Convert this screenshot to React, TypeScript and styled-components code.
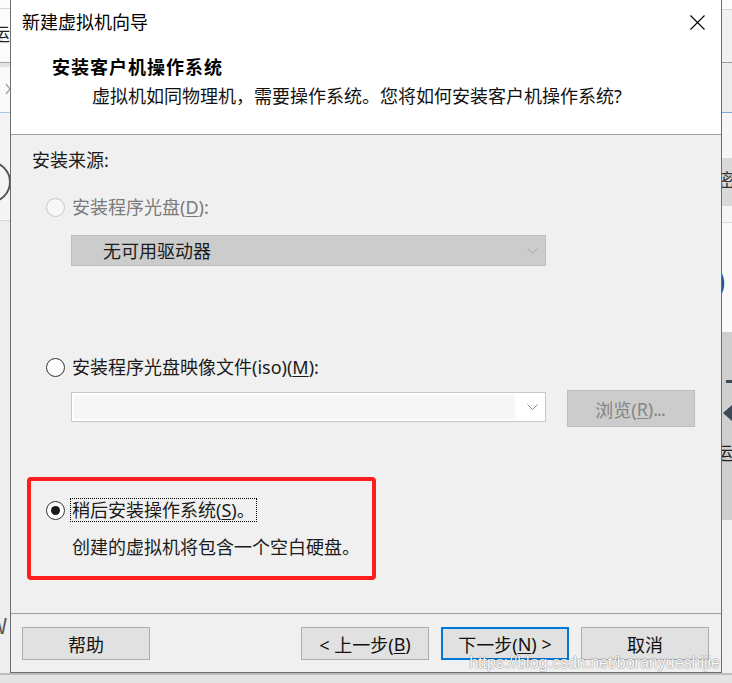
import React from "react";
import styled, { createGlobalStyle } from "styled-components";

const FONT = `"Noto Sans", "Noto Sans CJK SC", sans-serif`;

const Global = createGlobalStyle`
  html, body { margin: 0; padding: 0; }
  body { background: #e6e6e6; font-family: ${FONT}; overflow: hidden; }
  * { box-sizing: border-box; }
`;

const Screen = styled.div`
  width: 732px;
  height: 683px;
  display: flex;
  flex-direction: column;
  overflow: hidden;
  background: #e6e6e6;
`;

const TopRow = styled.div`
  display: flex;
  height: 673px;
`;

const Strip = styled.div`
  width: 10px;
  flex: 0 0 10px;
  display: flex;
  flex-direction: column;
  overflow: hidden;
  background: #f0f0f0;
`;

const Band = styled.div<{ $h?: number; $bg: string; $line?: string }>`
  position: relative;
  flex: ${(p) => (p.$h ? `0 0 ${p.$h}px` : "1 1 auto")};
  background: ${(p) => p.$bg};
  border-top: ${(p) => (p.$line ? `1px solid ${p.$line}` : "none")};
  overflow: hidden;
`;

const Glyph = styled.div<{ $size: number; $color: string; $top: number; $left: number; $weight?: number }>`
  font-family: "Noto Sans CJK SC", sans-serif;
  font-size: ${(p) => p.$size}px;
  line-height: ${(p) => p.$size}px;
  font-weight: ${(p) => p.$weight ?? 400};
  color: ${(p) => p.$color};
  margin-top: ${(p) => p.$top}px;
  margin-left: ${(p) => p.$left}px;
  white-space: nowrap;
`;

const Arc = styled.div`
  width: 42px;
  height: 42px;
  border-radius: 50%;
  border: 2px solid #4f5357;
  margin-top: 48px;
  margin-left: -31px;
`;

const Bar = styled.div<{ $top: number }>`
  width: 8px;
  height: 3px;
  background: #3d4a57;
  margin-top: ${(p) => p.$top}px;
  margin-left: 4px;
`;

const BottomShade = styled.div`
  flex: 1;
  background: #e4e4e4;
  border-top: 2px solid #bdbdbd;
`;

const Dialog = styled.div`
  position: relative;
  width: 712px;
  flex: 0 0 712px;
  height: 673px;
  border: 1px solid #6e6e6e;
  border-top: none;
  background: #f0f0f0;
  display: flex;
  flex-direction: column;
`;

const Header = styled.div`
  height: 135px;
  flex: 0 0 135px;
  background: #ffffff;
  border-bottom: 1px solid #a0a0a0;
`;

const TitleBar = styled.div`
  height: 44px;
  display: flex;
  align-items: center;
  justify-content: space-between;
  padding: 0 16px 0 11px;
`;

const Title = styled.div`
  font-size: 18px;
  line-height: 24px;
  color: #000;
`;

const CloseBtn = styled.div`
  width: 15px;
  height: 15px;
  display: flex;
`;

const Heading = styled.div`
  margin-top: 10px;
  padding-left: 41px;
  font-size: 18px;
  line-height: 26px;
  font-weight: 700;
  letter-spacing: 1px;
  color: #000;
`;

const SubTitle = styled.div`
  margin-top: 3px;
  padding-left: 81px;
  font-size: 18px;
  line-height: 26px;
  color: #111;
`;

const Content = styled.div`
  height: 479px;
  flex: 0 0 479px;
  border-bottom: 1px solid #a0a0a0;
  display: flex;
  flex-direction: column;
  align-items: flex-start;
`;

const SectionLabel = styled.div`
  margin-top: 12px;
  padding-left: 21px;
  font-size: 18px;
  line-height: 26px;
  color: #1b1b1b;
`;

const RadioRow = styled.div<{ $top: number; $indent: number }>`
  display: flex;
  align-items: center;
  height: 26px;
  margin-top: ${(p) => p.$top}px;
  padding-left: ${(p) => p.$indent}px;
`;

const RadioCircle = styled.span<{ $state: "disabled" | "off" | "on" }>`
  width: 19px;
  height: 19px;
  flex: 0 0 19px;
  border-radius: 50%;
  border: 1px solid ${(p) => (p.$state === "disabled" ? "#c6c6c6" : "#333333")};
  background: ${(p) => (p.$state === "disabled" ? "#f7f7f7" : "#ffffff")};
  display: flex;
  align-items: center;
  justify-content: center;
  &::after {
    content: "";
    display: ${(p) => (p.$state === "on" ? "block" : "none")};
    width: 9px;
    height: 9px;
    border-radius: 50%;
    background: #1a1a1a;
  }
`;

const RadioLabel = styled.span<{ $disabled?: boolean; $focused?: boolean }>`
  margin-left: 5px;
  padding: 0 1px;
  border: 1px ${(p) => (p.$focused ? "dotted #000" : "solid transparent")};
  font-size: 18px;
  line-height: 22px;
  color: ${(p) => (p.$disabled ? "#7b7b7b" : "#1b1b1b")};
  white-space: nowrap;
`;

const U = styled.span`
  text-decoration: underline;
  text-underline-offset: 2px;
`;

const Combo = styled.div<{ $disabled?: boolean; $top: number }>`
  margin-top: ${(p) => p.$top}px;
  margin-left: 60px;
  width: 475px;
  height: ${(p) => (p.$disabled ? 31 : 30)}px;
  border: 1px solid ${(p) => (p.$disabled ? "#bdbdbd" : "#c8c8c8")};
  background: ${(p) => (p.$disabled ? "#cccccc" : "#ffffff")};
  display: flex;
  align-items: center;
  padding: ${(p) => (p.$disabled ? "0 7px 0 31px" : "2px 7px 2px 2px")};
`;

const ComboText = styled.div`
  flex: 1;
  font-size: 18px;
  line-height: 26px;
  color: #1b1b1b;
`;

const ComboInput = styled.div`
  flex: 1;
  align-self: stretch;
  background: #f6f6f6;
  margin-right: 12px;
`;

const Chevron = styled.svg`
  width: 11px;
  height: 6px;
  flex: 0 0 11px;
`;

const FileRow = styled.div`
  margin-top: 10px;
  display: flex;
  align-items: flex-start;
`;

const BrowseBtn = styled.div`
  margin-left: 21px;
  width: 128px;
  height: 37px;
  border: 1px solid #bfbfbf;
  background: #cccccc;
  color: #858585;
  font-size: 18px;
  display: flex;
  align-items: center;
  justify-content: center;
  padding-right: 2px;
`;

const Dots = styled.span`
  letter-spacing: -1px;
`;

const Highlight = styled.div`
  margin-top: 50px;
  margin-left: 16px;
  width: 349px;
  height: 103px;
  border: 4px solid #fe1e1e;
  border-radius: 4px;
  display: flex;
  flex-direction: column;
`;

const FocusRow = styled.div`
  display: flex;
  align-items: center;
  height: 24px;
  margin-top: 17px;
  padding-left: 15px;
`;

const Description = styled.div`
  margin-top: 12px;
  padding-left: 41px;
  font-size: 18px;
  line-height: 26px;
  color: #1b1b1b;
  white-space: nowrap;
`;

const Footer = styled.div`
  flex: 1;
  display: flex;
  align-items: flex-start;
  gap: 12px;
  padding: 13px 12px 0 11px;
`;

const Spacer = styled.div`
  flex: 1;
`;

const Button = styled.div<{ $primary?: boolean }>`
  width: 128px;
  height: 33px;
  background: #e1e1e1;
  border: ${(p) => (p.$primary ? "2px solid #0078d7" : "1px solid #adadad")};
  font-size: 18px;
  color: #111;
  display: flex;
  align-items: center;
  justify-content: center;
  white-space: pre;
`;

const Watermark = styled.div`
  position: absolute;
  right: 1px;
  bottom: 0;
  font-family: "Liberation Sans", Arial, sans-serif;
  font-size: 16px;
  line-height: 18px;
  color: rgba(255, 255, 255, 0.95);
  text-shadow: 1px 0 0 rgba(0, 0, 0, 0.18), -1px 0 0 rgba(0, 0, 0, 0.18), 0 1px 0 rgba(0, 0, 0, 0.18),
    0 -1px 0 rgba(0, 0, 0, 0.18);
  pointer-events: none;
`;

const ChevronIcon = ({ color }: { color: string }) => (
  <Chevron viewBox="0 0 11 6">
    <polyline points="0.5,0.5 5.5,5.5 10.5,0.5" fill="none" stroke={color} strokeWidth="1" />
  </Chevron>
);

export default function App() {
  return (
    <>
      <Global />
      <Screen>
        <TopRow>
          <Strip>
            <Band $h={8} $bg="#fbfbfb" />
            <Band $h={54} $bg="#fbfbfb" $line="#d6d6d6">
              <Glyph $size={18} $color="#222" $top={15} $left={-8}>运</Glyph>
            </Band>
            <Band $h={5} $bg="#e2e2e2" $line="#a6a6a6" />
            <Band $h={45} $bg="#fafafa">
              <svg width="10" height="45" viewBox="0 0 10 45">
                <polyline points="6,17 10,22 6,27" fill="none" stroke="#a0a0a0" strokeWidth="1.3" />
              </svg>
            </Band>
            <Band $h={108} $bg="#f4f4f4" $line="#a9c6e6">
              <Arc />
            </Band>
            <Band $bg="#eeeeee" $line="#d6d6d6">
              <Glyph $size={22} $color="#5a5a5a" $top={392} $left={-12}>W</Glyph>
            </Band>
          </Strip>
          <Dialog>
            <Header>
              <TitleBar>
                <Title>新建虚拟机向导</Title>
                <CloseBtn>
                  <svg width="15" height="15" viewBox="0 0 15 15">
                    <path d="M0.5 0.5 L14.5 14.5 M14.5 0.5 L0.5 14.5" stroke="#000" strokeWidth="1.1" fill="none" />
                  </svg>
                </CloseBtn>
              </TitleBar>
              <Heading>安装客户机操作系统</Heading>
              <SubTitle>虚拟机如同物理机，需要操作系统。您将如何安装客户机操作系统?</SubTitle>
            </Header>
            <Content>
              <SectionLabel>安装来源:</SectionLabel>
              <RadioRow $top={21} $indent={35}>
                <RadioCircle $state="disabled" />
                <RadioLabel $disabled>
                  安装程序光盘(<U>D</U>):
                </RadioLabel>
              </RadioRow>
              <Combo $disabled $top={15}>
                <ComboText>无可用驱动器</ComboText>
                <ChevronIcon color="#a6a6a6" />
              </Combo>
              <RadioRow $top={88} $indent={35}>
                <RadioCircle $state="off" />
                <RadioLabel>
                  安装程序光盘映像文件(iso)(<U>M</U>):
                </RadioLabel>
              </RadioRow>
              <FileRow>
                <Combo $top={2}>
                  <ComboInput />
                  <ChevronIcon color="#8a8a8a" />
                </Combo>
                <BrowseBtn>
                  浏览(<U>R</U>)<Dots>...</Dots>
                </BrowseBtn>
              </FileRow>
              <Highlight>
                <FocusRow>
                  <RadioCircle $state="on" />
                  <RadioLabel $focused>
                    稍后安装操作系统(<U>S</U>)。
                  </RadioLabel>
                </FocusRow>
                <Description>创建的虚拟机将包含一个空白硬盘。</Description>
              </Highlight>
            </Content>
            <Footer>
              <Button>帮助</Button>
              <Spacer />
              <Button>
                {"< 上一步("}
                <U>B</U>
                {")"}
              </Button>
              <Button $primary>
                {"下一步("}
                <U>N</U>
                {") >"}
              </Button>
              <Button>取消</Button>
            </Footer>
            <Watermark>https://blog.csdn.net/boranyueshijie</Watermark>
          </Dialog>
          <Strip>
            <Band $h={9} $bg="#fbfbfb" />
            <Band $h={53} $bg="#f1f1f1" $line="#d4d4d4" />
            <Band $h={50} $bg="#ececec" $line="#9a9a9a" />
            <Band $h={46} $bg="#f6f6f6" $line="#7fa9d6" />
            <Band $h={48} $bg="#d9d9d9">
              <Glyph $size={18} $color="#333" $top={12} $left={-4}>密</Glyph>
            </Band>
            <Band $h={16} $bg="#f6f6f6" />
            <Band $h={110} $bg="#fafafa" $line="#dcdcdc">
              <Glyph $size={24} $color="#2a4a8c" $top={46} $left={-5} $weight={700}>)</Glyph>
            </Band>
            <Band $h={188} $bg="#cfcfcf">
              <Bar $top={48} />
              <svg width="10" height="16" viewBox="0 0 10 16" style={{ display: "block", marginTop: 22 }}>
                <polygon points="10,0 10,16 1,8" fill="#3d4a57" />
              </svg>
              <Glyph $size={18} $color="#222" $top={22} $left={-7}>运</Glyph>
            </Band>
            <Band $bg="#f0f0f0" />
          </Strip>
        </TopRow>
        <BottomShade />
      </Screen>
    </>
  );
}
